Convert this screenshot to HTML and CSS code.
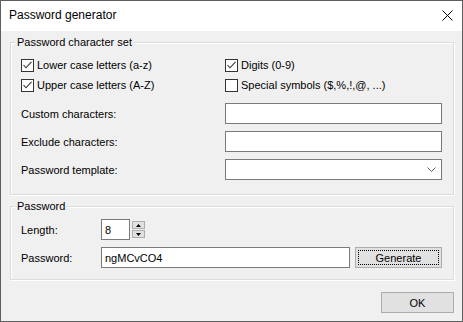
FILE: index.html
```html
<!DOCTYPE html>
<html>
<head>
  <title>Password generator</title>
  <link rel="stylesheet" href="styles.css">
</head>
<body>
  <div class="window">
    <div class="titlebar">
      <span>Password generator</span>
      <svg class="close" width="11" height="11" viewBox="0 0 11 11">
        <path d="M0.5 0.5 L10.5 10.5 M10.5 0.5 L0.5 10.5" stroke="#000" stroke-width="1" fill="none"/>
      </svg>
    </div>

    <div class="content">
      <fieldset class="group">
        <legend>Password character set</legend>

        <div class="checks">
          <label class="check">
            <span class="box"><svg width="11" height="11" viewBox="0 0 11 11"><path d="M1.5 5 L4 7.8 L9.5 1.8" stroke="#333" stroke-width="1.1" fill="none"/></svg></span>
            Lower case letters (a-z)
          </label>
          <label class="check">
            <span class="box"><svg width="11" height="11" viewBox="0 0 11 11"><path d="M1.5 5 L4 7.8 L9.5 1.8" stroke="#333" stroke-width="1.1" fill="none"/></svg></span>
            Digits (0-9)
          </label>
          <label class="check">
            <span class="box"><svg width="11" height="11" viewBox="0 0 11 11"><path d="M1.5 5 L4 7.8 L9.5 1.8" stroke="#333" stroke-width="1.1" fill="none"/></svg></span>
            Upper case letters (A-Z)
          </label>
          <label class="check"><span class="box"></span>Special symbols ($,%,!,@, ...)</label>
        </div>

        <div class="fields">
          <label for="custom">Custom characters:</label>
          <input type="text" id="custom" class="text">
          <label for="exclude">Exclude characters:</label>
          <input type="text" id="exclude" class="text">
          <label>Password template:</label>
          <div class="text select">
            <svg width="9" height="5" viewBox="0 0 9 5">
              <path d="M0.5 0.5 L4.5 4.5 L8.5 0.5" stroke="#606060" stroke-width="1" fill="none"/>
            </svg>
          </div>
        </div>
      </fieldset>

      <fieldset class="group second">
        <legend>Password</legend>

        <div class="pw-grid">
          <label for="length">Length:</label>
          <div class="spin">
            <input type="text" id="length" class="text length" value="8">
            <div class="spin-btns">
              <span class="spin-btn"><svg width="5" height="3" viewBox="0 0 5 3"><path d="M2.5 0 L5 3 L0 3 Z" fill="#000"/></svg></span>
              <span class="spin-btn"><svg width="5" height="3" viewBox="0 0 5 3"><path d="M0 0 L5 0 L2.5 3 Z" fill="#000"/></svg></span>
            </div>
          </div>

          <label for="password">Password:</label>
          <div class="pw-row">
            <input type="text" id="password" class="text password" value="ngMCvCO4">
            <button class="btn generate"><span>Generate</span></button>
          </div>
        </div>
      </fieldset>

      <div class="actions">
        <button class="btn ok">OK</button>
      </div>
    </div>
  </div>
</body>
</html>
```

FILE: styles.css
```css
body {
  margin: 0;
  font-family: "Liberation Sans", Arial, sans-serif;
  font-size: 11px;
  color: #000;
}
.window {
  width: 463px;
  height: 322px;
  box-sizing: border-box;
  border: 1px solid #5f5f5f;
  background-color: #f0f0f0;
  display: flex;
  flex-direction: column;
}
.titlebar {
  height: 30px;
  flex: none;
  background-color: #fff;
  display: flex;
  align-items: center;
  justify-content: space-between;
  padding: 0 9px 2px 8px;
  box-sizing: border-box;
  font-size: 12px;
}
.close {
  display: block;
}
.content {
  padding: 4px 8px 0 9px;
}
.group {
  margin: 0;
  padding: 0 11px 14px 10px;
  border: 1px solid #dcdcdc;
  box-shadow: inset 1px 1px #fff, 1px 1px #fff;
  min-width: 0;
}
.group legend {
  padding: 0 2px;
  margin-left: -6px;
  line-height: 14px;
  background-color: #f0f0f0;
}
.second {
  margin-top: 4px;
  padding-bottom: 11px;
}
.checks {
  display: grid;
  grid-template-columns: 204px 1fr;
  margin-top: 6px;
}
.check {
  display: flex;
  align-items: center;
  gap: 3px;
  height: 20px;
}
.box {
  width: 13px;
  height: 13px;
  flex: none;
  box-sizing: border-box;
  border: 1px solid #333;
  background-color: #fff;
}
.box svg {
  display: block;
}
.fields {
  display: grid;
  grid-template-columns: 204px 1fr;
  row-gap: 7px;
  margin-top: 8px;
  align-items: center;
}
.text {
  height: 21px;
  box-sizing: border-box;
  border: 1px solid #7a7a7a;
  background-color: #fff;
  padding: 0 3px;
  font: inherit;
  color: #000;
  margin: 0;
  outline: none;
}
.select {
  display: flex;
  align-items: center;
  justify-content: flex-end;
  padding-right: 5px;
}
.select svg {
  display: block;
}
.pw-grid {
  display: grid;
  grid-template-columns: 80px 1fr;
  row-gap: 7px;
  margin-top: 6px;
  align-items: center;
}
.spin {
  display: flex;
  align-items: center;
}
.length {
  width: 29px;
}
.spin-btns {
  display: flex;
  flex-direction: column;
  gap: 1px;
  margin-left: 2px;
}
.spin-btn {
  width: 13px;
  height: 8px;
  box-sizing: border-box;
  border: 1px solid #adadad;
  background-color: #e1e1e1;
  display: flex;
  align-items: center;
  justify-content: center;
}
.spin-btn svg {
  display: block;
}
.pw-row {
  display: flex;
  gap: 5px;
}
.password {
  width: 249px;
}
.btn {
  height: 21px;
  box-sizing: border-box;
  border: 1px solid #adadad;
  background-color: #e1e1e1;
  font: inherit;
  color: #000;
  margin: 0;
  padding: 0;
}
.generate {
  width: 87px;
  padding: 2px;
}
.generate span {
  display: flex;
  align-items: center;
  justify-content: center;
  height: 100%;
  box-sizing: border-box;
  border: 1px dotted #000;
}
.actions {
  display: flex;
  justify-content: flex-end;
  margin-top: 12px;
}
.ok {
  width: 73px;
}
```
